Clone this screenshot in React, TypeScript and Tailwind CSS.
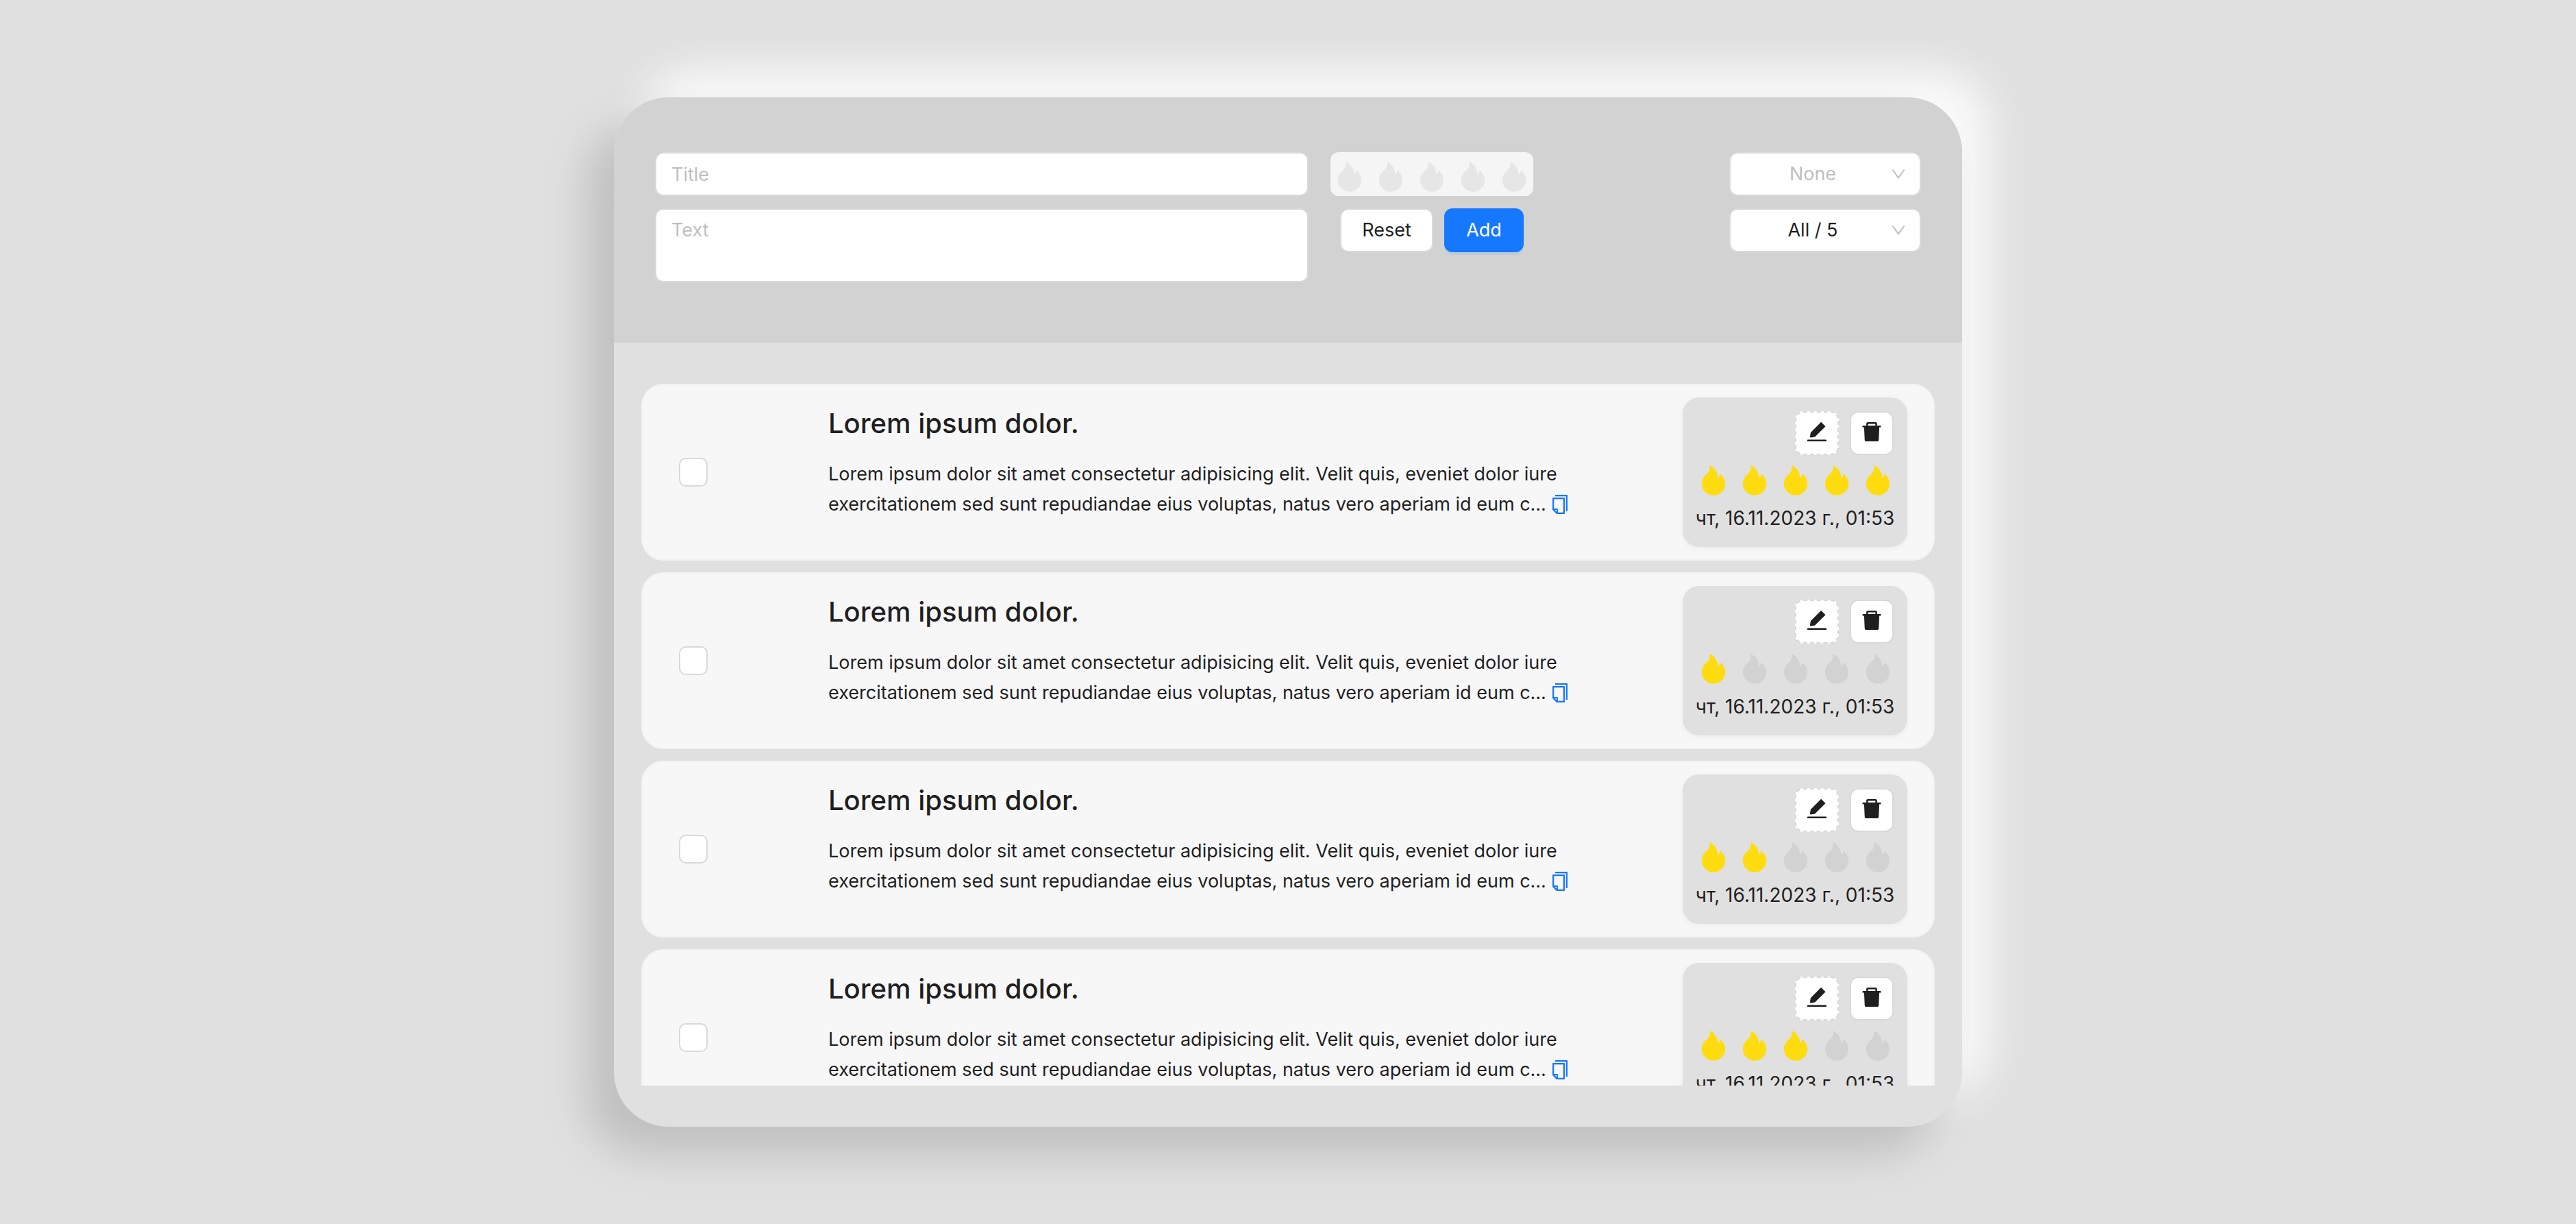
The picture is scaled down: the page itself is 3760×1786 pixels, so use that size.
import type { ReactNode } from "react";
import {
  AiFillDelete,
  AiFillEdit,
  AiFillFire,
  AiOutlineCopy,
  AiOutlineDown,
} from "react-icons/ai";

type Note = { id: number; title: string; text: string; rate: number; date: string };

const TITLE = "Lorem ipsum dolor.";
const TEXT =
  "Lorem ipsum dolor sit amet consectetur adipisicing elit. Velit quis, eveniet dolor iure exercitationem sed sunt repudiandae eius voluptas, natus vero aperiam id eum c...";
const DATE = "чт, 16.11.2023 г., 01:53";

const notes: Note[] = [5, 1, 2, 3, 4].map((rate, id) => ({
  id,
  title: TITLE,
  text: TEXT,
  rate,
  date: DATE,
}));

const FIELD =
  "block w-full rounded-xl border-2 border-[#d9d9d9] bg-white px-[22px] text-[27px] leading-[44px] text-[#1f1f1f] outline-none placeholder:text-[#bfbfbf]";

function Rate({ value, label }: { value: number; label: string }) {
  return (
    <div role="img" aria-label={label} className="flex gap-2.5">
      {[1, 2, 3, 4, 5].map((n) => (
        <AiFillFire
          key={n}
          aria-hidden="true"
          className={
            n <= value ? "size-[50px] shrink-0 text-[#ffdc0f]" : "size-[50px] shrink-0 text-black/6"
          }
        />
      ))}
    </div>
  );
}

function Select({
  label,
  muted,
  options,
}: {
  label: string;
  muted?: boolean;
  options: string[];
}) {
  return (
    <div className="relative">
      <select
        aria-label={label}
        className={
          muted
            ? "h-16 w-full appearance-none rounded-xl border-2 border-[#d9d9d9] bg-white pr-14 pl-5 text-[27px] text-[#bfbfbf] [text-align-last:center]"
            : "h-16 w-full appearance-none rounded-xl border-2 border-[#d9d9d9] bg-white pr-14 pl-5 text-[27px] text-[#1f1f1f] [text-align-last:center]"
        }
      >
        {options.map((o) => (
          <option key={o}>{o}</option>
        ))}
      </select>
      <AiOutlineDown
        aria-hidden="true"
        className="pointer-events-none absolute inset-y-0 right-5 my-auto size-[26px] text-[#bfbfbf]"
      />
    </div>
  );
}

function IconButton({
  label,
  dashed,
  children,
}: {
  label: string;
  dashed?: boolean;
  children: ReactNode;
}) {
  return (
    <button
      type="button"
      aria-label={label}
      className={
        dashed
          ? "flex size-16 items-center justify-center rounded-xl border-2 border-dashed border-[#d9d9d9] bg-white pb-1 text-[#1f1f1f]"
          : "flex size-16 items-center justify-center rounded-xl border-2 border-[#d9d9d9] bg-white pb-1 text-[#1f1f1f]"
      }
    >
      {children}
    </button>
  );
}

function NoteForm() {
  return (
    <header className="flex justify-between gap-10 bg-[#d2d2d2] px-[60px] pt-20 pb-[88px]">
      <form className="flex max-w-[1282px] flex-1 gap-8" onSubmit={(e) => e.preventDefault()}>
        <div className="flex flex-1 flex-col gap-[18px]">
          <input aria-label="Title" placeholder="Title" className={`${FIELD} h-16`} />
          <textarea
            aria-label="Text"
            placeholder="Text"
            className={`${FIELD} h-[108px] resize-none py-2`}
          />
        </div>
        <div className="flex w-[296px] flex-col gap-[18px]">
          <div className="flex h-16 items-center justify-center rounded-xl bg-[#f5f5f5] pt-2">
            <Rate value={0} label="Rating: not set" />
          </div>
          <div className="flex justify-center gap-4">
            <button
              type="reset"
              className="h-16 w-[136px] rounded-xl border-2 border-[#d9d9d9] bg-white text-[27px] text-[#1f1f1f]"
            >
              Reset
            </button>
            <button
              type="submit"
              className="h-16 w-[116px] rounded-xl bg-[#1677ff] text-[27px] text-white shadow-[0_4px_0_rgba(5,145,255,0.1)]"
            >
              Add
            </button>
          </div>
        </div>
      </form>
      <div className="flex w-[280px] flex-col gap-[18px]">
        <Select label="Sort by" muted options={["None", "Title", "Date"]} />
        <Select label="Filter by rating" options={["All / 5", "1", "2", "3", "4", "5"]} />
      </div>
    </header>
  );
}

function NoteCard({ note }: { note: Note }) {
  return (
    <li className="flex items-center rounded-[32px] border-2 border-[#f2f2f2] bg-[#f7f7f7] py-[18px] pr-[38px] pl-[53px] text-[#1f1f1f]">
      <input
        type="checkbox"
        aria-label={`Select ${note.title}`}
        className="size-[42px] shrink-0 appearance-none rounded-[10px] border-2 border-[#d9d9d9] bg-white"
      />
      <div className="ml-44 max-w-[1110px] flex-1 self-start pt-2.5">
        <h3 className="mb-6 text-[40px] leading-[56px] font-medium">{note.title}</h3>
        <p className="text-[27px] leading-[44px]">
          {note.text}
          <button type="button" aria-label="Copy" className="ml-1 pb-1 align-middle text-[#1677ff]">
            <AiOutlineCopy className="size-8" aria-hidden="true" />
          </button>
        </p>
      </div>
      <div className="ml-auto w-[328px] rounded-3xl bg-[#e0e0e0] p-5 shadow-[0_2px_8px_rgba(0,0,0,0.05)]">
        <div className="flex justify-end gap-4">
          <IconButton label="Edit" dashed>
            <AiFillEdit className="size-9" aria-hidden="true" />
          </IconButton>
          <IconButton label="Delete">
            <AiFillDelete className="size-9" aria-hidden="true" />
          </IconButton>
        </div>
        <div className="mt-3 mb-2">
          <Rate value={note.rate} label={`Rating: ${note.rate} of 5`} />
        </div>
        <time className="flex justify-center text-[28px] leading-[44px] whitespace-nowrap">
          {note.date}
        </time>
      </div>
    </li>
  );
}

export default function App() {
  return (
    <div className="flex min-h-screen items-center justify-center bg-[#e0e0e0] font-['Inter',sans-serif]">
      <main className="flex h-[calc(100vh-284px)] w-full max-w-[1968px] flex-col overflow-hidden rounded-[80px] bg-[#e0e0e0] pb-[60px] shadow-[-40px_40px_60px_#c0c0c0,40px_-40px_60px_#fafafa]">
        <NoteForm />
        <ul className="mx-10 mt-[60px] flex min-h-0 flex-1 flex-col gap-[17px] overflow-y-auto [scrollbar-width:none] *:shrink-0">
          {notes.map((note) => (
            <NoteCard key={note.id} note={note} />
          ))}
        </ul>
      </main>
    </div>
  );
}
